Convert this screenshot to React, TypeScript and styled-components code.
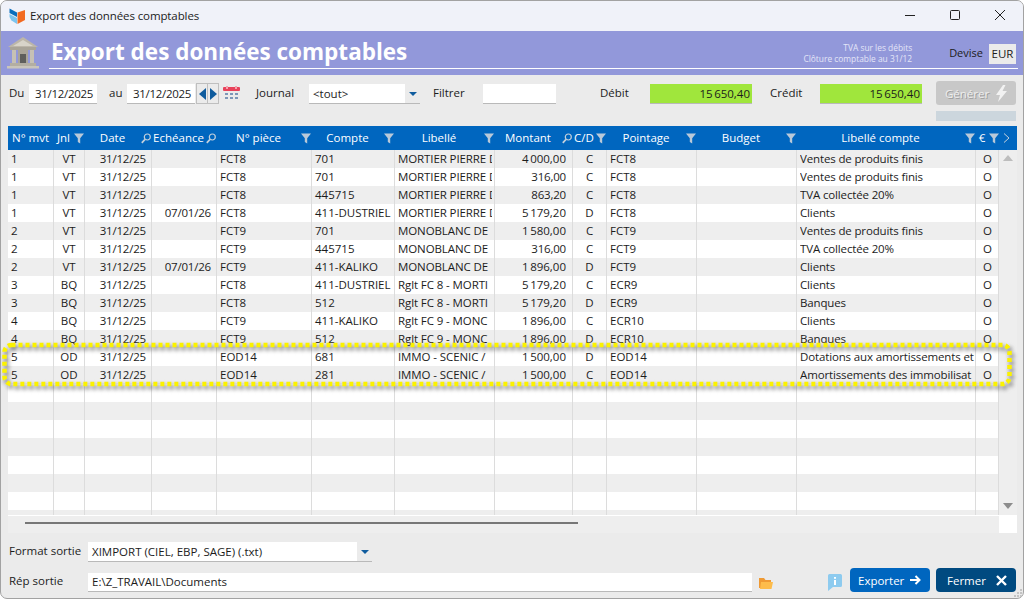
import React from "react";
import styled, { createGlobalStyle } from "styled-components";

const FONT = `"Open Sans", "Noto Sans", "Liberation Sans", sans-serif`;

const Global = createGlobalStyle`
  html, body { margin: 0; padding: 0; background: #ffffff; }
  * { box-sizing: border-box; }
  body { font-family: ${FONT}; font-size: 11.5px; color: #1c1c1c; }
`;

const Window = styled.div`
  position: relative;
  width: 1024px;
  height: 599px;
  background: #ebebeb;
  border: 1px solid #a2a2a2;
  border-radius: 7px;
  overflow: hidden;
  display: flex;
  flex-direction: column;
`;

const TitleBar = styled.div`
  height: 30px;
  flex: none;
  background: #f0f2f9;
  display: flex;
  align-items: center;
  padding-left: 8px;
  color: #1c1c1c;
`;

const TitleText = styled.span`
  margin-left: 4px;
  margin-top: -2px;
  font-size: 11.5px;
  letter-spacing: -0.1px;
`;

const WinButtons = styled.div`
  margin-left: auto;
  display: flex;
  align-items: center;
  padding-right: 1px;
`;

const WinButton = styled.div`
  width: 45px;
  height: 30px;
  display: flex;
  align-items: center;
  justify-content: center;
  margin-top: -2px;
`;

const Banner = styled.div`
  height: 44px;
  flex: none;
  background: #9298da;
  display: flex;
  padding: 0 5px 0 6px;
`;

const BankWrap = styled.div`
  width: 32px;
  padding-top: 6px;
  flex: none;
`;

const BannerBody = styled.div`
  flex: 1;
  height: 38px;
  margin-left: 10px;
  border-bottom: 1px solid #ffffff;
  display: flex;
  align-items: flex-end;
  padding-left: 2px;
`;

const BannerTitle = styled.h1`
  margin: 0 0 -1px;
  font-size: 22.5px;
  line-height: 34px;
  font-weight: 700;
  color: #fff;
  white-space: nowrap;
`;

const Notes = styled.div`
  margin-left: auto;
  margin-bottom: 4px;
  width: 120px;
  text-align: right;
  font-size: 8.4px;
  line-height: 11px;
  color: #e4e6f8;
  white-space: nowrap;
`;

const DeviseLabel = styled.span`
  margin-left: 37px;
  margin-bottom: 7px;
  font-size: 11px;
  line-height: 16px;
  color: #1c1c1c;
`;

const Eur = styled.div`
  margin-left: 6px;
  margin-right: 2px;
  margin-bottom: 4px;
  width: 27px;
  height: 20px;
  background: #ebebeb;
  font-size: 11.5px;
  line-height: 20px;
  text-align: center;
  color: #1c1c1c;
  flex: none;
`;

const Toolbar = styled.div`
  height: 51px;
  flex: none;
  display: flex;
  align-items: flex-start;
  padding: 9px 6px 0 8px;
`;

const Label = styled.span<{ $w: number }>`
  width: ${(p) => p.$w}px;
  flex: none;
  height: 20px;
  line-height: 18px;
  white-space: nowrap;
`;

const Field = styled.div<{ $w: number; $tight?: boolean }>`
  width: ${(p) => p.$w}px;
  flex: none;
  height: 20px;
  background: #fff;
  border-bottom: 1px solid #b9b9b9;
  line-height: 19px;
  padding-left: ${(p) => (p.$tight ? "6px" : "5px")};
  letter-spacing: ${(p) => (p.$tight ? "-0.3px" : "0")};
  white-space: nowrap;
  overflow: hidden;
`;

const Stepper = styled.div`
  margin: -1px 0 0 1px;
  width: 23px;
  height: 21px;
  flex: none;
  display: flex;
  border: 1px solid #bfbfbf;
`;

const StepHalf = styled.div`
  flex: 1;
  display: flex;
  align-items: center;
  justify-content: center;
  & + & { border-left: 1px solid #bfbfbf; }
`;

const CalendarIcon = styled.svg`
  flex: none;
  margin-top: 2px;
`;

const SelectBox = styled.div<{ $w: number }>`
  width: ${(p) => p.$w}px;
  flex: none;
  height: 20px;
  display: flex;
  background: linear-gradient(#fff, #fff) no-repeat left top / calc(100% - 15px) 100%;
  border-bottom: 1px solid #b9b9b9;
  line-height: 18px;
  padding-left: 4px;
  align-items: center;
  white-space: nowrap;
`;

const Caret = styled.span`
  margin-left: auto;
  margin-right: 3px;
  width: 0;
  height: 0;
  border-left: 4px solid transparent;
  border-right: 4px solid transparent;
  border-top: 4px solid #0f5c9e;
`;

const Amount = styled.div`
  width: 102px;
  flex: none;
  height: 20px;
  background: #a0e63c;
  border-bottom: 1px solid #b9b9b9;
  text-align: right;
  line-height: 19px;
  padding-right: 2px;
  letter-spacing: -0.25px;
`;

const GenColumn = styled.div`
  margin-left: 14px;
  margin-top: -3px;
  width: 80px;
  flex: none;
  display: flex;
  flex-direction: column;
  gap: 6px;
`;

const GenButton = styled.div`
  height: 24px;
  border-radius: 3px;
  background: #c8c8c8;
  color: #eeeeee;
  display: flex;
  align-items: center;
  justify-content: space-between;
  padding: 0 9px;
  text-shadow: 1px 1px 0 #9b9b9b;
`;

const GenBar = styled.div`
  height: 10px;
  background: #ccd6dd;
`;

const GridFrame = styled.div`
  margin: 0 6px 0 7px;
  height: 407px;
  flex: none;
  display: flex;
  flex-direction: column;
  background: #eeeeee;
  border-bottom: 1px solid #dadada;
  border-left: 1px solid #dcdcdc;
`;

const HeaderRow = styled.div`
  height: 24px;
  flex: none;
  margin-left: -1px;
  display: grid;
  grid-template-columns: 45px 31px 67px 65px 95px 83px 100px 78px 34px 90px 100px 179px 24px 17px;
  background: #0066bf;
  color: #fff;
`;

const HeaderCell = styled.div`
  display: flex;
  align-items: center;
  min-width: 0;
`;

const HeaderText = styled.span`
  flex: 1;
  text-align: center;
  white-space: nowrap;
  padding-bottom: 1px;
`;

const GridMiddle = styled.div`
  height: 365px;
  flex: none;
  margin-left: -1px;
  display: flex;
  overflow: hidden;
`;

const Rows = styled.div`
  width: 991px;
  flex: none;
`;

const Row = styled.div<{ $alt: boolean }>`
  height: 18px;
  display: grid;
  grid-template-columns: 46px 31px 67px 65px 95px 83px 100px 78px 34px 90px 100px 179px 23px;
  background: ${(p) => (p.$alt ? "#eeeeee" : "#ffffff")};
`;

const Cell = styled.div`
  border-right: 1px solid #dcdcdc;
  line-height: 18px;
  padding-left: 3px;
  white-space: nowrap;
  overflow: hidden;
`;

const CenterCell = styled(Cell)`
  padding-left: 0;
  text-align: center;
`;

const FlagCell = styled(CenterCell)`
  padding-left: 1px;
`;

const DateCell = styled(Cell)`
  padding: 0 5px 0 0;
  text-align: right;
  letter-spacing: -0.2px;
`;

const MoneyCell = styled(Cell)`
  padding: 0 6px 0 0;
  text-align: right;
  letter-spacing: -0.2px;
`;

const ClippedText = styled.div`
  margin-right: 2px;
  overflow: hidden;
  letter-spacing: -0.1px;
`;

const AccountText = styled.div`
  overflow: hidden;
  letter-spacing: -0.14px;
`;

const VScroll = styled.div`
  width: 17px;
  flex: none;
  background: #eeeeee;
  display: flex;
  flex-direction: column;
  justify-content: space-between;
  align-items: center;
  padding: 5px 0 6px;
`;

const HScrollZone = styled.div`
  height: 18px;
  flex: none;
  display: flex;
  margin-left: -1px;
  border-top: 1px solid #ffffff;
`;

const HTrack = styled.div`
  width: 991px;
  flex: none;
  padding: 6px 0 0 17px;
  background: #eeeeee;
`;

const HThumb = styled.div`
  width: 553px;
  height: 2px;
  background: #777777;
`;

const Corner = styled.div`
  flex: 1;
  background: #fff;
  margin-top: -1px;
`;

const Bottom = styled.div`
  flex: 1;
  display: flex;
  flex-direction: column;
  padding: 9px 6px 0 8px;
`;

const BottomRow = styled.div`
  display: flex;
  align-items: center;
  height: 20px;
`;

const PathRow = styled(BottomRow)`
  margin-top: 6px;
  height: 24px;
`;

const PathLabel = styled(Label)`
  margin-top: 4px;
`;

const PathField = styled(Field)`
  height: 19px;
  line-height: 18px;
  margin-top: 5px;
  padding-left: 4px;
`;

const FolderWrap = styled.div`
  margin: 6px 0 0 7px;
  display: flex;
`;

const InfoWrap = styled.div`
  margin: 4px 8px 0 55px;
  display: flex;
`;

const ActionButton = styled.div<{ $bg: string; $pl: number }>`
  width: 80px;
  height: 24px;
  border-radius: 4px;
  background: ${(p) => p.$bg};
  color: #fff;
  display: flex;
  align-items: center;
  justify-content: space-between;
  padding: 0 9px 0 ${(p) => p.$pl}px;
  & + & { margin-left: 6px; }
`;

const Highlight = styled.svg`
  position: absolute;
  left: 0;
  top: 0;
  pointer-events: none;
  filter: drop-shadow(2px 3px 2px rgba(60, 60, 60, 0.75));
`;

const Grip = styled.svg`
  position: absolute;
  right: 0;
  bottom: 0;
`;

const HeaderIcon = styled.svg`
  flex: none;
`;

const Funnel = () => (
  <HeaderIcon width="10" height="11" viewBox="0 0 10 11">
    <path d="M0 0.5H10L6.2 5.2V10.5L3.8 9V5.2Z" fill="#b9c9d9" />
  </HeaderIcon>
);

const Lens = () => (
  <HeaderIcon width="10" height="11" viewBox="0 0 10 11">
    <circle cx="6.3" cy="4" r="3" fill="none" stroke="#c3d0dc" strokeWidth="1.2" />
    <path d="M4 6.4L0.8 9.8" stroke="#c3d0dc" strokeWidth="1.7" />
  </HeaderIcon>
);

const headers: [string, "f" | "s" | ""][] = [
  ["N° mvt", ""],
  ["Jnl", "f"],
  ["Date", "s"],
  ["Echéance", "s"],
  ["N° pièce", "f"],
  ["Compte", "f"],
  ["Libellé", "f"],
  ["Montant", "s"],
  ["C/D", "f"],
  ["Pointage", "f"],
  ["Budget", "f"],
  ["Libellé compte", "f"],
  ["€", "f"],
];

type R = [string, string, string, string, string, string, string, string, string, string, string];

const S = "\u202f";
const data: R[] = [
  ["1", "VT", "", "FCT8", "701", "MORTIER PIERRE D", `4${S}000,00`, "C", "FCT8", "Ventes de produits finis", "O"],
  ["1", "VT", "", "FCT8", "701", "MORTIER PIERRE D", "316,00", "C", "FCT8", "Ventes de produits finis", "O"],
  ["1", "VT", "", "FCT8", "445715", "MORTIER PIERRE D", "863,20", "C", "FCT8", "TVA collectée 20%", "O"],
  ["1", "VT", "07/01/26", "FCT8", "411-DUSTRIEL", "MORTIER PIERRE D", `5${S}179,20`, "D", "FCT8", "Clients", "O"],
  ["2", "VT", "", "FCT9", "701", "MONOBLANC DE", `1${S}580,00`, "C", "FCT9", "Ventes de produits finis", "O"],
  ["2", "VT", "", "FCT9", "445715", "MONOBLANC DE", "316,00", "C", "FCT9", "TVA collectée 20%", "O"],
  ["2", "VT", "07/01/26", "FCT9", "411-KALIKO", "MONOBLANC DE", `1${S}896,00`, "D", "FCT9", "Clients", "O"],
  ["3", "BQ", "", "FCT8", "411-DUSTRIEL", "Rglt FC 8 - MORTI", `5${S}179,20`, "C", "ECR9", "Clients", "O"],
  ["3", "BQ", "", "FCT8", "512", "Rglt FC 8 - MORTI", `5${S}179,20`, "D", "ECR9", "Banques", "O"],
  ["4", "BQ", "", "FCT9", "411-KALIKO", "Rglt FC 9 - MONC", `1${S}896,00`, "C", "ECR10", "Clients", "O"],
  ["4", "BQ", "", "FCT9", "512", "Rglt FC 9 - MONC", `1${S}896,00`, "D", "ECR10", "Banques", "O"],
  ["5", "OD", "", "EOD14", "681", "IMMO - SCENIC /", `1${S}500,00`, "D", "EOD14", "Dotations aux amortissements et", "O"],
  ["5", "OD", "", "EOD14", "281", "IMMO - SCENIC /", `1${S}500,00`, "C", "EOD14", "Amortissements des immobilisat", "O"],
];

export default function App() {
  const rows = Array.from({ length: 21 }, (_, i) => data[i] ?? null);
  return (
    <Window>
      <Global />
      <TitleBar>
        <svg width="17" height="17" viewBox="0 0 17 17">
          <path d="M0.5 0.5L8 4.5V9L0.5 5Z" fill="#0a6ebd" />
          <path d="M0.5 6L8 10V16L2.5 12.5L0.5 9Z" fill="#7cc4ee" />
          <path d="M8.5 4.5L16 2V12L8.5 16Z" fill="#f26a21" />
        </svg>
        <TitleText>Export des données comptables</TitleText>
        <WinButtons>
          <WinButton>
            <svg width="12" height="12" viewBox="0 0 12 12"><path d="M1 6.5H11" stroke="#222" strokeWidth="1" /></svg>
          </WinButton>
          <WinButton>
            <svg width="12" height="12" viewBox="0 0 12 12"><rect x="1.5" y="1.5" width="9" height="9" rx="1" fill="none" stroke="#222" strokeWidth="1" /></svg>
          </WinButton>
          <WinButton>
            <svg width="12" height="12" viewBox="0 0 12 12"><path d="M1 1L11 11M11 1L1 11" stroke="#222" strokeWidth="1" /></svg>
          </WinButton>
        </WinButtons>
      </TitleBar>

      <Banner>
        <BankWrap>
          <svg width="32" height="32" viewBox="0 0 32 32">
            <path d="M16 0L31 10H1Z" fill="#bcb6a9" />
            <path d="M16 3L26 9H6Z" fill="#d8d4c9" />
            <rect x="3" y="10" width="26" height="3" fill="#a9a498" />
            <rect x="5" y="13" width="4" height="13" fill="#c6c1b5" />
            <rect x="11" y="13" width="10" height="13" fill="#a9a498" />
            <rect x="13" y="17" width="6" height="9" fill="#5e5e5c" />
            <rect x="23" y="13" width="4" height="13" fill="#c6c1b5" />
            <rect x="3" y="26" width="26" height="3" fill="#b3aea2" />
            <rect x="0" y="29" width="32" height="2.5" fill="#c9c5ba" />
          </svg>
        </BankWrap>
        <BannerBody>
          <BannerTitle>Export des données comptables</BannerTitle>
          <Notes>
            TVA sur les débits
            <br />
            Clôture comptable au 31/12
          </Notes>
          <DeviseLabel>Devise</DeviseLabel>
          <Eur>EUR</Eur>
        </BannerBody>
      </Banner>

      <Toolbar>
        <Label $w={20}>Du</Label>
        <Field $w={68} $tight>31/12/2025</Field>
        <Label $w={12} />
        <Label $w={18}>au</Label>
        <Field $w={68} $tight>31/12/2025</Field>
        <Stepper>
          <StepHalf>
            <svg width="7" height="12" viewBox="0 0 7 12"><path d="M7 0V12L0 6Z" fill="#0f5c9e" /></svg>
          </StepHalf>
          <StepHalf>
            <svg width="7" height="12" viewBox="0 0 7 12"><path d="M0 0V12L7 6Z" fill="#0f5c9e" /></svg>
          </StepHalf>
        </Stepper>
        <Label $w={4} />
        <CalendarIcon width="17" height="15" viewBox="0 0 17 15">
          <rect x="0" y="1" width="17" height="4" rx="1" fill="#e8425a" />
          <rect x="3" y="0" width="2" height="3" fill="#f5a3ad" />
          <rect x="12" y="0" width="2" height="3" fill="#f5a3ad" />
          <path d="M2 7h3v2h-3zM7 7h3v2h-3zM12 7h3v2h-3zM2 11h3v2h-3zM7 11h3v2h-3zM12 11h3v2h-3z" fill="#7d97b8" />
        </CalendarIcon>
        <Label $w={16} />
        <Label $w={53}>Journal</Label>
        <SelectBox $w={111}>
          &lt;tout&gt;
          <Caret />
        </SelectBox>
        <Label $w={13} />
        <Label $w={50}>Filtrer</Label>
        <Field $w={73} />
        <Label $w={44} />
        <Label $w={50}>Débit</Label>
        <Amount>15{S}650,40</Amount>
        <Label $w={18} />
        <Label $w={50}>Crédit</Label>
        <Amount>15{S}650,40</Amount>
        <GenColumn>
          <GenButton>
            Générer
            <svg width="11" height="17" viewBox="0 0 11 17"><path d="M7 0L0 10H4L2 17L11 6H6.5L9.5 0Z" fill="#f2f2f2" /></svg>
          </GenButton>
          <GenBar />
        </GenColumn>
      </Toolbar>

      <GridFrame>
        <HeaderRow>
          {headers.map(([t, k]) => (
            <HeaderCell key={t}>
              <HeaderText>{t}</HeaderText>
              {k === "f" && <Funnel />}
              {k === "s" && <Lens />}
            </HeaderCell>
          ))}
          <HeaderCell>
            <svg width="17" height="12" viewBox="0 0 17 12">
              <path d="M5 1.5L10 6L5 10.5" fill="none" stroke="#c3d0dc" strokeWidth="1" />
            </svg>
          </HeaderCell>
        </HeaderRow>
        <GridMiddle>
          <Rows>
            {rows.map((r, i) => (
              <Row key={i} $alt={i % 2 === 0}>
                <Cell>{r?.[0]}</Cell>
                <CenterCell>{r?.[1]}</CenterCell>
                <DateCell>{r ? "31/12/25" : ""}</DateCell>
                <DateCell>{r?.[2]}</DateCell>
                <Cell>{r?.[3]}</Cell>
                <Cell>{r?.[4]}</Cell>
                <Cell><ClippedText>{r?.[5]}</ClippedText></Cell>
                <MoneyCell>{r?.[6]}</MoneyCell>
                <CenterCell>{r?.[7]}</CenterCell>
                <Cell>{r?.[8]}</Cell>
                <Cell />
                <Cell><AccountText>{r?.[9]}</AccountText></Cell>
                <FlagCell>{r?.[10]}</FlagCell>
              </Row>
            ))}
          </Rows>
          <VScroll>
            <svg width="10" height="6" viewBox="0 0 10 6"><path d="M5 0L10 6H0Z" fill="#bdbdbd" /></svg>
            <svg width="10" height="6" viewBox="0 0 10 6"><path d="M0 0H10L5 6Z" fill="#8c8c8c" /></svg>
          </VScroll>
        </GridMiddle>
        <HScrollZone>
          <HTrack>
            <HThumb />
          </HTrack>
          <Corner />
        </HScrollZone>
      </GridFrame>

      <Bottom>
        <BottomRow>
          <Label $w={79}>Format sortie</Label>
          <SelectBox $w={284}>
            XIMPORT (CIEL, EBP, SAGE) (.txt)
            <Caret />
          </SelectBox>
        </BottomRow>
        <PathRow>
          <PathLabel $w={79}>Rép sortie</PathLabel>
          <PathField $w={664}>E:\Z_TRAVAIL\Documents</PathField>
          <FolderWrap>
            <svg width="14" height="12" viewBox="0 0 14 12">
              <path d="M0 1H5L6.5 3H12V11H0Z" fill="#ef9a34" />
              <path d="M2 5H14L12.5 12H1Z" fill="#fdbc4b" />
            </svg>
          </FolderWrap>
          <InfoWrap>
            <svg width="14" height="17" viewBox="0 0 14 17">
              <path d="M0 1.5Q0 0 1.5 0H12.5Q14 0 14 1.5V11.5Q14 13 12.5 13H5L0 17Z" fill="#8ecbef" />
              <rect x="6" y="3" width="2" height="1.8" fill="#fff" />
              <rect x="6" y="6" width="2" height="5" fill="#fff" />
            </svg>
          </InfoWrap>
          <ActionButton $bg="#0066bf" $pl={8}>
            Exporter
            <svg width="11" height="10" viewBox="0 0 11 10">
              <path d="M0 5H9M5.5 1L9.5 5L5.5 9" fill="none" stroke="#fff" strokeWidth="2" />
            </svg>
          </ActionButton>
          <ActionButton $bg="#004a80" $pl={11}>
            Fermer
            <svg width="11" height="11" viewBox="0 0 11 11">
              <path d="M1 1L10 10M10 1L1 10" fill="none" stroke="#fff" strokeWidth="2.4" />
            </svg>
          </ActionButton>
        </PathRow>
      </Bottom>

      <Highlight width="1022" height="597" viewBox="0 0 1022 597">
        <rect x="3.5" y="344" width="1005" height="39" rx="7" fill="none" stroke="#fbf200" strokeWidth="4.5" strokeDasharray="4 3" />
      </Highlight>
      <Grip width="10" height="10" viewBox="0 0 10 10">
        <path d="M7 1h2v2h-2zM4 4h2v2h-2zM7 4h2v2h-2zM1 7h2v2h-2zM4 7h2v2h-2zM7 7h2v2h-2z" fill="#c4c4c4" />
      </Grip>
    </Window>
  );
}
